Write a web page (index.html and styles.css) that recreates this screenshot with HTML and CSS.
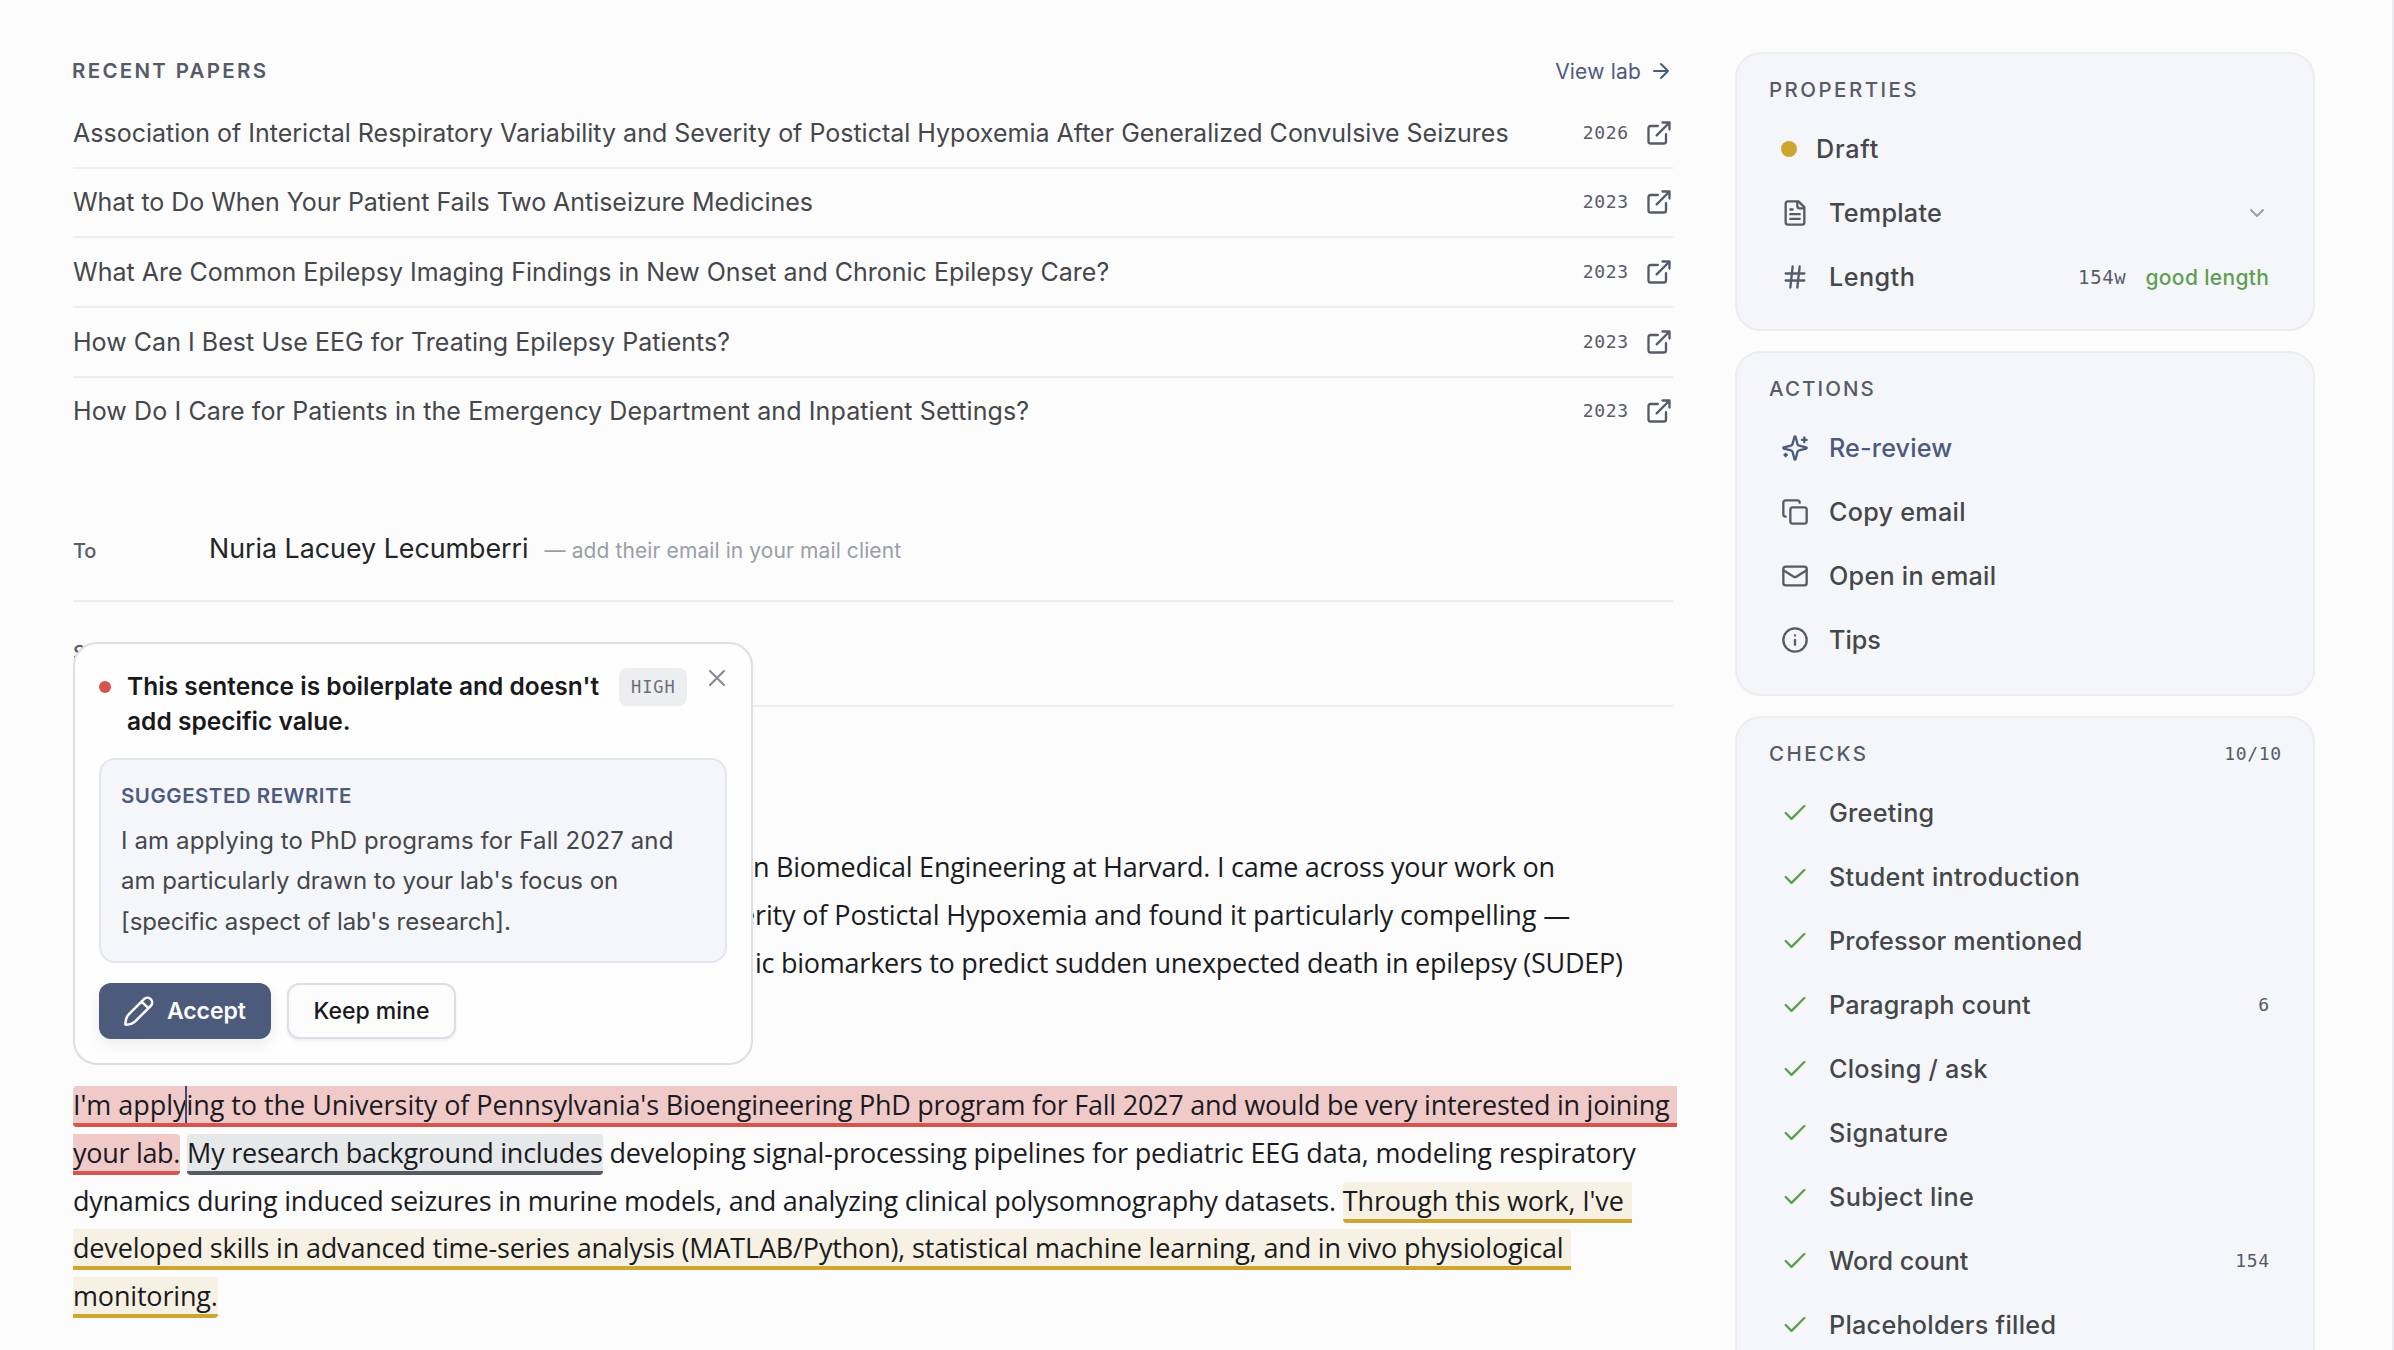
FILE: index.html
```html
<!DOCTYPE html>
<html lang="en">
<head>
<meta charset="utf-8">
<title>Email draft</title>
<link rel="stylesheet" href="styles.css">
</head>
<body>
<svg class="defs" width="0" height="0">
  <symbol id="external" viewBox="0 0 24 24"><path d="M15 3h6v6M10 14 21 3M18 13v6a2 2 0 0 1-2 2H5a2 2 0 0 1-2-2V8a2 2 0 0 1 2-2h6"/></symbol>
  <symbol id="check" viewBox="0 0 24 24"><path d="M20 6 9 17l-5-5"/></symbol>
</svg>
<div class="page">
  <main class="main">
    <header class="papers-head">
      <h2 class="caps">RECENT PAPERS</h2>
      <a class="view-lab">View lab <svg class="icon sm" viewBox="0 0 24 24"><path d="M5 12h14M12 5l7 7-7 7"/></svg></a>
    </header>
    <ul class="papers">
      <li><span class="title">Association of Interictal Respiratory Variability and Severity of Postictal Hypoxemia After Generalized Convulsive Seizures</span><span class="mono">2026</span><svg class="icon"><use href="#external"/></svg></li>
      <li><span class="title t2">What to Do When Your Patient Fails Two Antiseizure Medicines</span><span class="mono">2023</span><svg class="icon"><use href="#external"/></svg></li>
      <li><span class="title">What Are Common Epilepsy Imaging Findings in New Onset and Chronic Epilepsy Care?</span><span class="mono">2023</span><svg class="icon"><use href="#external"/></svg></li>
      <li><span class="title t4">How Can I Best Use EEG for Treating Epilepsy Patients?</span><span class="mono">2023</span><svg class="icon"><use href="#external"/></svg></li>
      <li><span class="title t5">How Do I Care for Patients in the Emergency Department and Inpatient Settings?</span><span class="mono">2023</span><svg class="icon"><use href="#external"/></svg></li>
    </ul>

    <div class="field first"><span class="label">To</span><span class="name">Nuria Lacuey Lecumberri</span><span class="hint">— add their email in your mail client</span></div>
    <div class="field"><span class="label">Subject</span></div>

    <div class="letter">
      <p class="intro">
        <span class="line l1"><span class="lead w1"></span>n Biomedical Engineering at Harvard. I came across your work on</span>
        <span class="line l2"><span class="lead w2">e</span>rity of Postictal Hypoxemia and found it particularly compelling —</span>
        <span class="line l3"><span class="lead w3">ic </span>biomarkers to predict sudden unexpected death in epilepsy (SUDEP)</span>
      </p>
      <p class="fit">
        <span class="line l4"><mark class="high start trail"><span class="m0">I'm apply<i class="caret"></i>ing to the University of Pennsylvania's</span> Bioengineering PhD program for Fall 2027 and would be very interested in joining</mark></span>
        <span class="line l5"><mark class="high end m1">your lab.</mark><mark class="low start end m2">My research background includes</mark><span class="m3">developing signal-processing pipelines for pediatric EEG data, modeling respiratory</span></span>
        <span class="line l6">dynamics during induced seizures in murine models, and analyzing clinical polysomnography datasets.<mark class="mid start trail m4">Through this work, I've</mark></span>
        <span class="line l7"><mark class="mid trail">developed skills in advanced time-series analysis (MATLAB/Python), statistical machine learning, and in vivo physiological</mark></span>
        <span class="line l8"><mark class="mid end">monitoring.</mark></span>
      </p>
    </div>

    <section class="popup">
      <div class="popup-head">
        <span class="dot red"></span>
        <h3><span class="h1">This sentence is boilerplate and doesn't</span><br><span>add specific value.</span></h3>
        <span class="badge">HIGH</span>
        <svg class="icon close" viewBox="0 0 24 24"><path d="M18 6 6 18M6 6l12 12"/></svg>
      </div>
      <div class="rewrite">
        <h4>SUGGESTED REWRITE</h4>
        <p><span class="r1">I am applying to PhD programs for Fall 2027 and</span><br><span class="r2">am particularly drawn to your lab's focus on</span><br><span class="r3">[specific aspect of lab's research].</span></p>
      </div>
      <div class="buttons">
        <button class="btn primary"><svg class="icon pencil" viewBox="0 0 32 32"><path d="M21 4.200a4.700 4.700 0 0 1 6.800 6.600L12.200 26.300c-2.300 2.100-5.300 3.200-9 3.400-.7 0-1-.4-.9-1C2.500 25 3.400 21.900 5.500 19.700zM18.600 6.600l6.700 6.600"/></svg>Accept</button>
        <button class="btn">Keep mine</button>
      </div>
    </section>
  </main>

  <aside class="side">
    <section class="card props">
      <header><h2 class="caps">PROPERTIES</h2></header>
      <div class="row draft"><span class="dot gold"></span><span class="k s5">Draft</span></div>
      <div class="row"><svg class="icon" viewBox="0 0 24 24"><path d="M15 2H6a2 2 0 0 0-2 2v16a2 2 0 0 0 2 2h12a2 2 0 0 0 2-2V7zM14 2v4a2 2 0 0 0 2 2h4M10 9H8M16 13H8M16 17H8"/></svg><span class="k">Template</span><svg class="icon sm chev" viewBox="0 0 24 24"><path d="m6 9 6 6 6-6"/></svg></div>
      <div class="row"><svg class="icon" viewBox="0 0 24 24"><path d="M4 9h16M4 15h16M10 3 8 21M16 3l-2 18"/></svg><span class="k s4">Length</span><span class="mono words">154w</span><span class="good">good length</span></div>
    </section>
    <section class="card acts">
      <header><h2 class="caps acth">ACTIONS</h2></header>
      <div class="row accent"><svg class="icon" viewBox="0 0 24 24"><path d="M9.937 15.500A2 2 0 0 0 8.500 14.063l-6.135-1.582a.5.5 0 0 1 0-.962L8.500 9.936A2 2 0 0 0 9.937 8.500l1.582-6.135a.5.5 0 0 1 .963 0L14.063 8.500A2 2 0 0 0 15.500 9.937l6.135 1.581a.5.5 0 0 1 0 .964L15.500 14.063a2 2 0 0 0-1.437 1.437l-1.582 6.135a.5.5 0 0 1-.963 0zM20 3v4M22 5h-4M4 17v2M5 18H3"/></svg><span class="k s1">Re-review</span></div>
      <div class="row"><svg class="icon" viewBox="0 0 24 24"><rect x="8" y="8" width="14" height="14" rx="2"/><path d="M4 16c-1.100 0-2-.9-2-2V4c0-1.100.9-2 2-2h10c1.100 0 2 .9 2 2"/></svg><span class="k">Copy email</span></div>
      <div class="row"><svg class="icon" viewBox="0 0 24 24"><rect x="2" y="4" width="20" height="16" rx="2"/><path d="m22 7-8.970 5.700a1.940 1.940 0 0 1-2.060 0L2 7"/></svg><span class="k">Open in email</span></div>
      <div class="row"><svg class="icon" viewBox="0 0 24 24"><circle cx="12" cy="12" r="10"/><path d="M12 16v-4M12 8h.01"/></svg><span class="k s0">Tips</span></div>
    </section>
    <section class="card checks">
      <header><h2 class="caps">CHECKS</h2><span class="mono">10/10</span></header>
      <div class="row"><svg class="icon ok"><use href="#check"/></svg><span class="k">Greeting</span></div>
      <div class="row"><svg class="icon ok"><use href="#check"/></svg><span class="k">Student introduction</span></div>
      <div class="row"><svg class="icon ok"><use href="#check"/></svg><span class="k s1">Professor mentioned</span></div>
      <div class="row"><svg class="icon ok"><use href="#check"/></svg><span class="k s1">Paragraph count</span><span class="mono">6</span></div>
      <div class="row"><svg class="icon ok"><use href="#check"/></svg><span class="k">Closing / ask</span></div>
      <div class="row"><svg class="icon ok"><use href="#check"/></svg><span class="k s3">Signature</span></div>
      <div class="row"><svg class="icon ok"><use href="#check"/></svg><span class="k s2">Subject line</span></div>
      <div class="row"><svg class="icon ok"><use href="#check"/></svg><span class="k s0">Word count</span><span class="mono">154</span></div>
      <div class="row"><svg class="icon ok"><use href="#check"/></svg><span class="k">Placeholders filled</span></div>
      <div class="row"><svg class="icon ok"><use href="#check"/></svg></div>
    </section>
  </aside>
</div>
</body>
</html>
```
FILE: styles.css
```css
* { box-sizing: border-box; margin: 0; padding: 0; }
html, body { height: 1350px; overflow: hidden; }
body { background: #fcfcfc; font-family: Inter, "Liberation Sans", sans-serif; color: #45474b; }
.defs { display: block; position: absolute; }

.page { display: flex; height: 1350px; padding-left: 73px; overflow: hidden; border-right: 2px solid #ececf0; }
.main { position: relative; width: 1600px; padding-top: 57px; flex: none; }
.side { width: 580px; margin-left: 62px; padding-top: 52px; flex: none; display: flex; flex-direction: column; gap: 20.500px; }

.icon { width: 28px; height: 28px; flex: none; fill: none; stroke: #565b68; stroke-width: 2; stroke-linecap: round; stroke-linejoin: round; }
.icon.sm { width: 24px; height: 24px; stroke-width: 2; }
.mono { font: 18px/28px "DejaVu Sans Mono", monospace; letter-spacing: .66px; margin-right: -.66px; color: #565b68; }
.caps { font-size: 20.500px; line-height: 28px; font-weight: 600; letter-spacing: 2.300px; color: #565b68; }

.papers-head { display: flex; justify-content: space-between; align-items: center; height: 28px; margin-bottom: 14px; }
.papers-head .caps { margin-left: -1px; }
.view-lab { display: flex; align-items: center; gap: 8px; font-size: 21px; letter-spacing: .2px; color: #4c5a7c; }
.view-lab .icon { stroke: #4c5a7c; }
.papers { list-style: none; }
.papers li { display: flex; align-items: center; height: 69.670px; border-bottom: 2px solid #ededef; white-space: nowrap; }
.papers li:last-child { border-bottom: 0; height: 67.670px; }
.papers .title { flex: 1; font-size: 25px; letter-spacing: 0; }
.papers .t2 { letter-spacing: -.04px; }
.papers .t4 { letter-spacing: .04px; }
.papers .t5 { letter-spacing: .11px; }
.papers .icon { margin-left: 17px; }

.field { display: flex; align-items: baseline; height: 105px; border-bottom: 2px solid #ededef; line-height: 103px; white-space: nowrap; }
.field.first { margin-top: 52px; }
.label { width: 136px; font-size: 20px; font-weight: 500; letter-spacing: -.2px; color: #565b68; }
.name { font-size: 26.800px; letter-spacing: 0; color: #232529; }
.hint { margin-left: 16px; font-size: 21px; letter-spacing: .1px; color: #9a9ea6; }

.letter { padding-top: 136px; font: 27px/47.850px "Open Sans", "Noto Sans", sans-serif; color: #1a1b1f; }
.letter p { height: 237.600px; }
.line { display: block; white-space: nowrap; }
.lead { display: inline-block; text-align: right; white-space: pre; }
.w1 { width: 680px; }
.w2 { width: 682px; }
.w3 { width: 708px; }
.l1, .l3, .m2 { letter-spacing: -.247px; }
.l2 { letter-spacing: -.13px; }
.m0 { letter-spacing: -.05px; }
.l4 { letter-spacing: -.24px; }
.m3 { letter-spacing: -.174px; }
.l6 { letter-spacing: -.257px; }
.l7, .l8, .m4 { letter-spacing: -.174px; }
.m1 { letter-spacing: -.3px; margin-right: 7px; }
.m2 { margin-right: 7px; }
.m4 { margin-left: 7px; }
mark { color: inherit; }
.high { background: #f0c9c9; border-bottom: 4px solid #d6534e; }
.low { background: #e6e8ea; border-bottom: 4px solid #555a66; }
.mid { background: #f7f1e3; border-bottom: 4px solid #cda632; }
.start { border-top-left-radius: 4px; border-bottom-left-radius: 4px; }
.end { border-top-right-radius: 4px; border-bottom-right-radius: 4px; }
.trail { padding-right: 8px; }
.caret { display: inline-block; width: 2px; height: 37px; margin: -8px -1px 0; vertical-align: -8px; line-height: 0; background: #3d4a73; }

.popup { position: absolute; left: 0; top: 642px; width: 680px; height: 423px; padding: 25px 24px 24px; background: #fefefe; border: 2px solid #dddee6; border-radius: 24px; }
.popup-head { display: flex; align-items: flex-start; height: 70px; margin-bottom: 19px; }
.dot { flex: none; border-radius: 50%; }
.dot.red { width: 12px; height: 12px; margin: 12px 16px 0 0; background: #d4534e; }
.popup h3 { width: 492px; font-size: 24.500px; line-height: 35px; font-weight: 600; letter-spacing: .02px; color: #18191d; white-space: nowrap; }
.badge { height: 38px; width: 68px; margin-top: -1px; border-radius: 8px; background: #edeef0; color: #6a6e78; font: 17px/39px "DejaVu Sans Mono", monospace; letter-spacing: .9px; padding-left: 12px; }
.close { margin: -5px -4px 0 auto; stroke: #858993; stroke-width: 1.800; }
.rewrite { height: 205px; padding: 21.500px 20px 0; background: #f5f6f9; border: 2px solid #e4e6ee; border-radius: 16px; white-space: nowrap; }
.rewrite h4 { font-size: 20.500px; line-height: 28px; font-weight: 600; letter-spacing: .5px; color: #4c5a7e; margin-bottom: 11px; }
.rewrite p { font-size: 24px; line-height: 40.500px; }
.r1 { letter-spacing: .12px; }
.r2 { letter-spacing: -.02px; }
.r3 { letter-spacing: -.1px; }
.buttons { display: flex; gap: 16px; margin-top: 20px; }
.btn { height: 56px; width: 169px; border: 2px solid #dddee6; border-radius: 12px; background: #fcfcfc; font: 500 23px Inter, sans-serif; color: #18191d; box-shadow: 0 2px 3px rgba(20, 25, 50, .06); }
.btn.primary { width: 172px; display: flex; align-items: center; gap: 12px; padding-left: 24px; border: 0; background: #4c5a7c; color: #fcfcfc; font-weight: 600; letter-spacing: -.1px; box-shadow: 0 6px 14px rgba(20, 25, 50, .08); }
.pencil { width: 32px; height: 32px; stroke: #fcfcfc; stroke-width: 2.500; }

.card { flex: none; background: #f5f6f9; border: 2px solid #ededf0; border-radius: 26px; }
.props { height: 278.500px; }
.acts { height: 344.500px; }
.card header { display: flex; justify-content: space-between; align-items: center; height: 28px; margin: 22px 32px 13px; }
.card .caps { font-weight: 500; letter-spacing: 2.450px; }
.card .acth { letter-spacing: 2.100px; }
.row { display: flex; align-items: center; height: 64px; padding: 0 44px; }
.k { flex: 1; margin-left: 20px; font-size: 25.200px; font-weight: 500; letter-spacing: .26px; }
.s0 { letter-spacing: 0; }
.s1 { letter-spacing: .12px; }
.s2 { letter-spacing: .38px; }
.s3 { letter-spacing: .45px; }
.s4 { letter-spacing: .45px; }
.s5 { letter-spacing: .75px; }
.draft .k { margin-left: 19px; }
.dot.gold { width: 16px; height: 16px; background: #cda632; }
.chev { stroke: #9a9ea6; }
.words { font-size: 19px; margin-right: 19px; }
.good { font-size: 21px; font-weight: 500; letter-spacing: .35px; margin-right: -.35px; color: #5f9e52; }
.accent .k { color: #4c5a7e; }
.accent .icon { stroke: #4c5a7e; }
.icon.ok { stroke: #5f9e52; stroke-width: 2; }
```
